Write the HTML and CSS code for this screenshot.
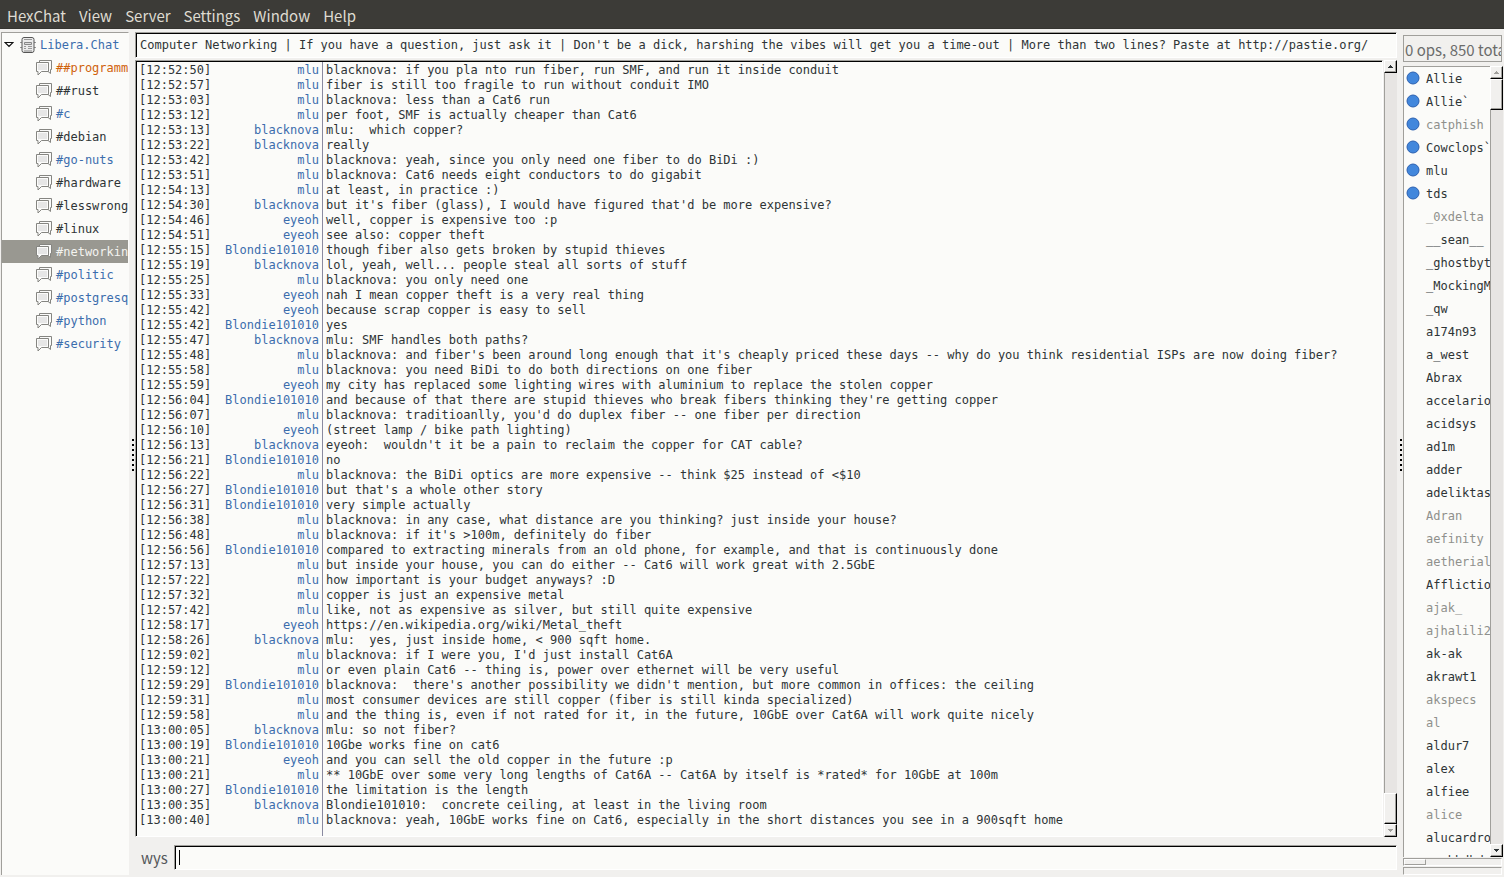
FILE: index.html
```html
<!DOCTYPE html>
<html lang="en">
<head>
<meta charset="utf-8">
<title>HexChat</title>
<link rel="stylesheet" href="styles.css">
</head>
<body>
<nav class="menubar" aria-label="Main menu">
  <button type="button">HexChat</button>
  <button type="button">View</button>
  <button type="button">Server</button>
  <button type="button">Settings</button>
  <button type="button">Window</button>
  <button type="button">Help</button>
</nav>
<svg width="0" height="0" class="defs" aria-hidden="true">
  <symbol id="bubble" viewBox="0 0 16 16">
    <path d="M3.500 2V.5h12v9h-1v4l-3-2.500z" fill="#fbfbfa" stroke="#858581"/>
    <path d="M.5 2.500h12v9h-7l-3.500 3.500v-3.500h-1.500z" fill="#fbfbfa" stroke="#858581"/>
    <path d="M2 4h9v6h-9z" fill="#e6e6e6"/>
  </symbol>
  <symbol id="op" viewBox="0 0 14 14">
    <circle cx="7" cy="7" r="6" fill="#4287dc" stroke="#2b60b0"/>
  </symbol>
  <symbol id="up" viewBox="0 0 5 3"><path d="M2 0h1v1h1v1h1v1H0V2h1V1h1z" fill="currentColor"/></symbol>
  <symbol id="down" viewBox="0 0 5 3"><path d="M2 3h1V2h1V1h1V0H0v1h1v1h1z" fill="currentColor"/></symbol>
</svg>
<div class="window">
  <aside class="tree">
    <div class="network">
      <svg class="expander" viewBox="0 0 10 6"><path d="M1 .5h8l-4 4z" fill="#fff" stroke="#111" stroke-width="1.200"/></svg>
      <svg class="server" viewBox="0 0 16 16"><path d="M0 5.500h16M0 10.500h16" stroke="#999"/><rect x="2" y=".5" width="12" height="15" rx="2" fill="#ececec" stroke="#555"/><path d="M4 2.500h8" stroke="#999"/><path d="M4.500 5.500h7v2h-7z" fill="#ddd" stroke="#888"/><path d="M4 9.500h2M8 9.500h4M4 11.500h2M8 11.500h4" stroke="#999"/><path d="M5 13v2M7 13v2M9 13v2M11 13v2" stroke="#888"/></svg>
      <a href="#libera" class="new">Libera.Chat</a>
    </div>
    <ul class="channels" id="channels"></ul>
  </aside>
  <div class="grip"></div>
  <main class="center">
    <input class="field topic" aria-label="Topic" value="Computer Networking | If you have a question, just ask it | Don't be a dick, harshing the vibes will get you a time-out | More than two lines? Paste at http://pastie.org/">
    <div class="log">
      <div class="field messages"><table><tbody id="messages"></tbody></table></div>
      <div class="scroll">
        <button type="button" aria-label="Scroll up"><svg><use href="#up"/></svg></button>
        <div class="space"></div><div class="thumb"></div>
        <button type="button" class="off" aria-label="Scroll down"><svg><use href="#down"/></svg></button>
      </div>
    </div>
    <div class="entry">
      <label for="say">wys</label>
      <input class="field" id="say">
    </div>
  </main>
  <div class="grip"></div>
  <aside class="people">
    <div class="count">0 ops, 850 total</div>
    <div class="roster">
      <ul class="users" id="users"></ul>
      <div class="scroll">
        <button type="button" class="off" aria-label="Scroll up"><svg><use href="#up"/></svg></button>
        <div class="thumb"></div><div class="space"></div>
        <button type="button" aria-label="Scroll down"><svg><use href="#down"/></svg></button>
      </div>
    </div>
    <div class="meter"><div class="level"></div></div>
    <div class="meter"></div>
  </aside>
</div>
<script src="app.js"></script>
</body>
</html>
```
FILE: styles.css
```css
* { box-sizing: border-box; }
body {
  margin: 0;
  height: 100vh;
  display: flex;
  flex-direction: column;
  overflow: hidden;
  background: #f1f0ee;
  color: #2e3436;
  font: 12px/15px "DejaVu Sans Mono", monospace;
}
button, input { font: inherit; color: inherit; margin: 0; padding: 0; border: 0; border-radius: 0; outline: 0; }
ul { margin: 0; padding: 0; list-style: none; }
a { color: inherit; text-decoration: none; }
svg { display: block; flex: none; }
.defs { position: absolute; }

.menubar {
  flex: none;
  display: flex;
  gap: 13px;
  height: 29px;
  padding: 1px 7px 0;
  border-bottom: 1px solid #353430;
  background: #3c3b37;
  color: #dfdbd2;
  font: 15px/29px "Noto Sans CJK SC", "Noto Sans", sans-serif;
}
.menubar button { background: none; }

.window { flex: 1; min-height: 0; display: flex; padding-right: 1px; }

.tree {
  flex: none;
  width: 128px;
  margin: 3px 0 2px 1px;
  border: solid #a09f9b;
  border-width: 1px 0 0 1px;
  border-right: 1px solid #fbfbf9;
  background: #fbfbf9;
  overflow: hidden;
}
.network, .channels a { display: flex; align-items: center; height: 23px; white-space: nowrap; }
.network { gap: 3px; padding-left: 2px; }
.network a, .channels span, .users span { padding-top: 2px; }
.expander { width: 10px; height: 6px; }
.server { width: 16px; height: 16px; margin: 0 1px 0 3px; }
.channels a { gap: 4px; padding-left: 34px; }
.channels svg { width: 16px; height: 16px; }
.new { color: #3b6dad; }
.hilight { color: #d0620c; }
.current { background: #999891; color: #f4f4f0; }

.grip { flex: none; width: 6px; display: flex; align-items: center; }
.grip::before {
  content: "";
  width: 2px;
  height: 32px;
  margin: 4px 0 0 3px;
  background: repeating-linear-gradient(#000 0 2px, transparent 2px 5px);
}

.field {
  background: #fbfbf9;
  border: 1px solid #fff;
  border-top-color: #a09f9b;
  border-left-color: #a09f9b;
  box-shadow: inset 1px 1px #000;
}
.center { flex: 1; min-width: 0; display: flex; flex-direction: column; padding: 3px 0 7px; }
.topic { flex: none; width: 100%; height: 26px; padding: 0 4px; }
.log { flex: 1; min-height: 0; display: flex; gap: 1px; margin: 2px 0 8px; }
.messages { flex: 1; min-width: 0; padding: 1px; overflow: hidden; }
.messages table { width: 100%; height: 100%; border-collapse: separate; border-spacing: 0; table-layout: fixed; }
.messages td { height: 15px; padding: 0; white-space: pre; vertical-align: top; }
.messages tr:first-child td { height: 16px; padding-top: 1px; }
.messages .time { width: 78px; padding-left: 2px; }
.messages .nick { width: 108px; padding-right: 3px; border-right: 1px solid #8a8aa0; text-align: right; color: #3b6dad; }
.messages .text { padding-left: 3px; }

.scroll { flex: none; width: 13px; display: flex; flex-direction: column; background: #e7e5e3; border-left: 1px solid #a09f9b; }
.scroll button, .thumb {
  flex: none;
  margin-left: -1px;
  border: 1px solid #fff;
  border-right-color: #000;
  border-bottom-color: #000;
  background: #f1f0ee;
  box-shadow: inset -1px -1px #a09f9b;
}
.scroll button { height: 13px; display: grid; place-items: center; }
.scroll button svg { width: 5px; height: 3px; }
.off { color: #a09f9b; }
.thumb { height: 31px; }
.space { flex: 1; }

.entry { flex: none; display: flex; align-items: center; height: 25px; padding-left: 6px; gap: 6px; }
.entry label { font: 15px/25px "Noto Sans CJK SC", "Noto Sans", sans-serif; color: #55575a; }
.entry input {
  flex: 1;
  min-width: 0;
  height: 25px;
  padding: 0 4px;
  caret-color: transparent;
  background: linear-gradient(#000, #000) 4px 4px / 1px 15px no-repeat #fbfbf9;
}

.people { flex: none; width: 100px; display: flex; flex-direction: column; padding: 6px 0 1px; }
.count {
  flex: none;
  height: 27px;
  margin-right: 1px;
  border: 1px solid #a09f9b;
  padding-left: 1px;
  font: 15px/27px "Noto Sans CJK SC", "Noto Sans", sans-serif;
  color: #6b6c6b;
  white-space: nowrap;
  overflow: hidden;
}
.roster { flex: 1; min-height: 0; display: flex; margin: 4px 0 1px; }
.users { flex: 1; min-width: 0; overflow: hidden; background: #fbfbf9; border: solid #a09f9b; border-width: 1px 0 0 1px; }
.users li { display: flex; align-items: center; gap: 6px; height: 23px; padding-left: 2px; white-space: nowrap; }
.users svg { width: 14px; height: 14px; margin-bottom: 1px; }
.away { color: #8f908c; }
.meter { flex: none; height: 8px; margin: 0 1px 1px 0; border: 1px solid #a09f9b; border-right-color: #fff; border-bottom-color: #fff; }
.level { width: 22px; height: 6px; border: 1px solid #a09f9b; border-top-color: #fff; border-left-color: #fff; }
```
FILE: app.js
```js
const channels = [
  ["##programming", "hilight"], ["##rust", ""], ["#c", "new"], ["#debian", ""],
  ["#go-nuts", "new"], ["#hardware", ""], ["#lesswrong", ""], ["#linux", ""],
  ["#networking", "current"], ["#politic", "new"], ["#postgresql", "new"],
  ["#python", "new"], ["#security", "new"],
];

const log = `12:52:50 mlu blacknova: if you pla nto run fiber, run SMF, and run it inside conduit
12:52:57 mlu fiber is still too fragile to run without conduit IMO
12:53:03 mlu blacknova: less than a Cat6 run
12:53:12 mlu per foot, SMF is actually cheaper than Cat6
12:53:13 blacknova mlu:  which copper?
12:53:22 blacknova really
12:53:42 mlu blacknova: yeah, since you only need one fiber to do BiDi :)
12:53:51 mlu blacknova: Cat6 needs eight conductors to do gigabit
12:54:13 mlu at least, in practice :)
12:54:30 blacknova but it's fiber (glass), I would have figured that'd be more expensive?
12:54:46 eyeoh well, copper is expensive too :p
12:54:51 eyeoh see also: copper theft
12:55:15 Blondie101010 though fiber also gets broken by stupid thieves
12:55:19 blacknova lol, yeah, well... people steal all sorts of stuff
12:55:25 mlu blacknova: you only need one
12:55:33 eyeoh nah I mean copper theft is a very real thing
12:55:42 eyeoh because scrap copper is easy to sell
12:55:42 Blondie101010 yes
12:55:47 blacknova mlu: SMF handles both paths?
12:55:48 mlu blacknova: and fiber's been around long enough that it's cheaply priced these days -- why do you think residential ISPs are now doing fiber?
12:55:58 mlu blacknova: you need BiDi to do both directions on one fiber
12:55:59 eyeoh my city has replaced some lighting wires with aluminium to replace the stolen copper
12:56:04 Blondie101010 and because of that there are stupid thieves who break fibers thinking they're getting copper
12:56:07 mlu blacknova: traditioanlly, you'd do duplex fiber -- one fiber per direction
12:56:10 eyeoh (street lamp / bike path lighting)
12:56:13 blacknova eyeoh:  wouldn't it be a pain to reclaim the copper for CAT cable?
12:56:21 Blondie101010 no
12:56:22 mlu blacknova: the BiDi optics are more expensive -- think $25 instead of <$10
12:56:27 Blondie101010 but that's a whole other story
12:56:31 Blondie101010 very simple actually
12:56:38 mlu blacknova: in any case, what distance are you thinking? just inside your house?
12:56:48 mlu blacknova: if it's >100m, definitely do fiber
12:56:56 Blondie101010 compared to extracting minerals from an old phone, for example, and that is continuously done
12:57:13 mlu but inside your house, you can do either -- Cat6 will work great with 2.5GbE
12:57:22 mlu how important is your budget anyways? :D
12:57:32 mlu copper is just an expensive metal
12:57:42 mlu like, not as expensive as silver, but still quite expensive
12:58:17 eyeoh https://en.wikipedia.org/wiki/Metal_theft
12:58:26 blacknova mlu:  yes, just inside home, < 900 sqft home.
12:59:02 mlu blacknova: if I were you, I'd just install Cat6A
12:59:12 mlu or even plain Cat6 -- thing is, power over ethernet will be very useful
12:59:29 Blondie101010 blacknova:  there's another possibility we didn't mention, but more common in offices: the ceiling
12:59:31 mlu most consumer devices are still copper (fiber is still kinda specialized)
12:59:58 mlu and the thing is, even if not rated for it, in the future, 10GbE over Cat6A will work quite nicely
13:00:05 blacknova mlu: so not fiber?
13:00:19 Blondie101010 10Gbe works fine on cat6
13:00:21 eyeoh and you can sell the old copper in the future :p
13:00:21 mlu ** 10GbE over some very long lengths of Cat6A -- Cat6A by itself is *rated* for 10GbE at 100m
13:00:27 Blondie101010 the limitation is the length
13:00:35 blacknova Blondie101010:  concrete ceiling, at least in the living room
13:00:40 mlu blacknova: yeah, 10GbE works fine on Cat6, especially in the short distances you see in a 900sqft home`;

/* "+" marks a voiced user, "~" a user who is away. */
const users = ("+Allie +Allie` +~catphish +Cowclops` +mlu +tds ~_0xdelta __sean__ _ghostbyte _MockingM _qw " +
  "a174n93 a_west Abrax accelario acidsys ad1m adder adeliktas ~Adran ~aefinity ~aetherial Afflictio " +
  "~ajak_ ~ajhalili2 ak-ak akrawt1 ~akspecs ~al aldur7 alex alfiee ~alice alucardro amahbdbd").split(" ");

function el(tag, cls, text) {
  const node = document.createElement(tag);
  if (cls) node.className = cls;
  if (text) node.textContent = text;
  return node;
}

function icon(name) {
  const box = document.createElement("template");
  box.innerHTML = `<svg aria-hidden="true"><use href="#${name}"/></svg>`;
  return box.content.firstChild;
}

for (const [name, state] of channels) {
  const item = el("li");
  const link = el("a", state);
  link.href = "#" + name;
  link.append(icon("bubble"), el("span", "", name));
  item.append(link);
  document.getElementById("channels").append(item);
}

const body = document.getElementById("messages");
for (const line of log.split("\n")) {
  const [, time, nick, text] = line.match(/^(\S+) (\S+) (.*)$/);
  const row = el("tr");
  row.append(el("td", "time", `[${time}]`), el("td", "nick", nick), el("td", "text", text));
  body.append(row);
}
const rest = el("tr", "rest");
rest.append(el("td", "time"), el("td", "nick"), el("td", "text"));
body.append(rest);

for (const entry of users) {
  const item = el("li", entry.includes("~") ? "away" : "");
  const slot = icon(entry.startsWith("+") ? "op" : "");
  item.append(slot, el("span", "", entry.replace(/^[+~]+/, "")));
  document.getElementById("users").append(item);
}
```
